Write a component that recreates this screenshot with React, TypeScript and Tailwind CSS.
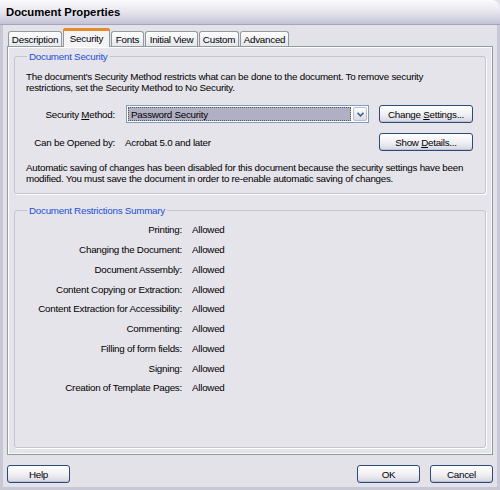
import React from "react";

const font = { fontFamily: '"Liberation Sans", Arial, sans-serif' };

function Tab({ label, selected }: { label: string; selected?: boolean }) {
  if (selected) {
    return (
      <div className="relative z-10 -mb-px flex h-[19px] items-start justify-center rounded-t-[3px] border border-b-0 border-[#919B9C] bg-[#F4F4F6]">
        <div className="absolute -left-px -right-px -top-px h-[3px] rounded-t-[3px] bg-[#E68B2C]" />
        <span className="mt-[4px]">{label}</span>
      </div>
    );
  }
  return (
    <div className="flex h-[15px] items-center justify-center rounded-t-[3px] border border-b-0 border-[#919B9C] bg-gradient-to-b from-white to-[#E6E6EC]">
      <span>{label}</span>
    </div>
  );
}

function Btn({ children, w }: { children: React.ReactNode; w: string }) {
  return (
    <div
      className={`${w} flex h-[18px] items-center justify-center rounded-[3px] border border-[#2E4A78] bg-gradient-to-b from-white via-[#F1F1F5] to-[#D6D6E2] text-black shadow-[inset_0_-1px_0_#C0C0D0]`}
    >
      {children}
    </div>
  );
}

const rows = [
  "Printing:",
  "Changing the Document:",
  "Document Assembly:",
  "Content Copying or Extraction:",
  "Content Extraction for Accessibility:",
  "Commenting:",
  "Filling of form fields:",
  "Signing:",
  "Creation of Template Pages:",
];

export default function App() {
  return (
    <div style={font} className="relative h-[490px] w-[500px] overflow-hidden bg-[#E3E2E9] text-[9.8px] leading-[11px] tracking-[-0.25px] text-black">
      <div className="flex h-full flex-col rounded-tr-[8px] border-x-[3px] border-b-[3px] border-[#C8C7D6]">
        {/* title bar */}
        <div className="-mx-[3px] flex h-[25px] shrink-0 items-center rounded-tr-[8px] border-b border-[#A5A4BC] bg-gradient-to-b from-[#FBFBFD] via-[#E6E5EE] to-[#C4C3D6] pl-[6px]">
          <span className="text-[11.3px] font-bold tracking-[0px] text-black">Document Properties</span>
        </div>
        <div className="flex flex-1 flex-col bg-[#E3E2E9] px-[4px]">
          {/* tabs */}
          <div className="mt-[3px] flex items-end pl-[1px]">
            <div className="flex items-end">
              <div className="w-[54px]"><Tab label="Description" /></div>
              <div className="ml-[1px] w-[47px]"><Tab label="Security" selected /></div>
              <div className="ml-[1px] w-[33px]"><Tab label="Fonts" /></div>
              <div className="ml-[1px] w-[53px]"><Tab label="Initial View" /></div>
              <div className="ml-[1px] w-[40px]"><Tab label="Custom" /></div>
              <div className="ml-[1px] w-[49px]"><Tab label="Advanced" /></div>
            </div>
          </div>
          {/* panel */}
          <div className="h-[409px] border border-[#919B9C] bg-[#E5E4EA] px-[6px] pt-[4px] shadow-[inset_1px_1px_0_#FFFFFF,inset_-1px_-1px_0_#F7F7F9]">
            <fieldset className="h-[143px] rounded-[3px] border border-[#C5C4CE] px-[11px] shadow-[1px_1px_0_#FFFFFF]">
              <legend className="ml-[1px] px-[2px] text-[#1C4FD6]">Document Security</legend>
              <div className="mt-[9px] whitespace-nowrap">
                The document's Security Method restricts what can be done to the document. To remove security
                <br />
                restrictions, set the Security Method to No Security.
              </div>
              <div className="mt-[12px] flex items-center">
                <div className="w-[89px] text-right">
                  Security <span className="underline">M</span>ethod:
                </div>
                <div className="ml-[11px] flex h-[18px] w-[243px] items-stretch border border-[#7F9DB9] bg-white">
                  <div className="m-[1px] flex flex-1 items-center bg-[#B1AFC4] px-[3px] outline outline-1 outline-dotted outline-[#555] outline-offset-[-1px]">
                    Password Security
                  </div>
                  <div className="m-[1px] flex w-[14px] items-center justify-center rounded-[2px] border border-[#B8BCD0] bg-gradient-to-b from-white to-[#D9DAE6]">
                    <svg width="7" height="5" viewBox="0 0 7 5">
                      <path d="M0.5 0.8 L3.5 3.8 L6.5 0.8" fill="none" stroke="#4D6185" strokeWidth="1.6" />
                    </svg>
                  </div>
                </div>
                <div className="ml-[10px]">
                  <Btn w="w-[94px]">
                    <span>Change <span className="underline">S</span>ettings...</span>
                  </Btn>
                </div>
              </div>
              <div className="mt-[10px] flex items-center">
                <div className="w-[89px] text-right">Can be Opened by:</div>
                <div className="ml-[10px] w-[243px]">Acrobat 5.0 and later</div>
                <div className="ml-[11px]">
                  <Btn w="w-[94px]">
                    <span>Show <span className="underline">D</span>etails...</span>
                  </Btn>
                </div>
              </div>
              <div className="mt-[11px] whitespace-nowrap">
                Automatic saving of changes has been disabled for this document because the security settings have been
                <br />
                modified. You must save the document in order to re-enable automatic saving of changes.
              </div>
            </fieldset>
            <fieldset className="mt-[11px] h-[243px] rounded-[3px] border border-[#C5C4CE] px-[11px] shadow-[1px_1px_0_#FFFFFF]">
              <legend className="ml-[1px] px-[2px] text-[#1C4FD6]">Document Restrictions Summary</legend>
              <div className="mt-[4px] flex flex-col">
                {rows.map((r) => (
                  <div key={r} className="flex h-[19.75px] items-center">
                    <div className="w-[156px] whitespace-nowrap text-right">{r}</div>
                    <div className="ml-[10px]">Allowed</div>
                  </div>
                ))}
              </div>
            </fieldset>
          </div>
          {/* footer */}
          <div className="mt-[10px] flex items-center">
            <Btn w="w-[63px]">Help</Btn>
            <div className="flex-1" />
            <Btn w="w-[63px]">OK</Btn>
            <div className="ml-[10px]">
              <Btn w="w-[63px]">Cancel</Btn>
            </div>
          </div>
        </div>
      </div>
    </div>
  );
}
